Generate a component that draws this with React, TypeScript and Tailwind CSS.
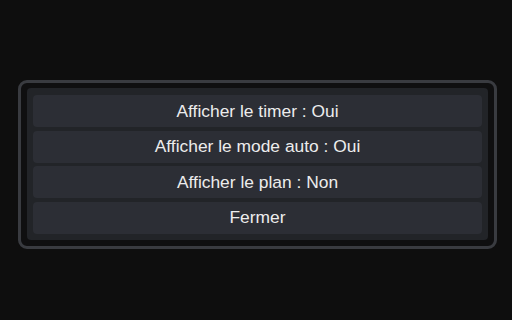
const options = [
  "Afficher le timer : Oui",
  "Afficher le mode auto : Oui",
  "Afficher le plan : Non",
  "Fermer",
];

export default function App() {
  return (
    <div
      className="w-[512px] h-[320px] bg-[#0e0e0e] pt-[80px] pl-[18px]"
      style={{ fontFamily: '"Liberation Sans", Arial, sans-serif' }}
    >
      <div className="w-[479px] border-[3px] border-[#393b40] rounded-[9px] bg-[#0f0f10] pt-[5px] pb-[6px] px-[6px]">
        <div className="bg-[#222428] rounded-[4px] px-[6px] pt-[7px] pb-[6.5px] flex flex-col gap-[3.5px]">
          {options.map((label) => (
            <button
              key={label}
              className="h-[32px] w-full rounded-[4px] bg-[#2c2e35] text-[#ececec] text-[17.4px] flex items-center justify-center"
            >
              {label}
            </button>
          ))}
        </div>
      </div>
    </div>
  );
}
